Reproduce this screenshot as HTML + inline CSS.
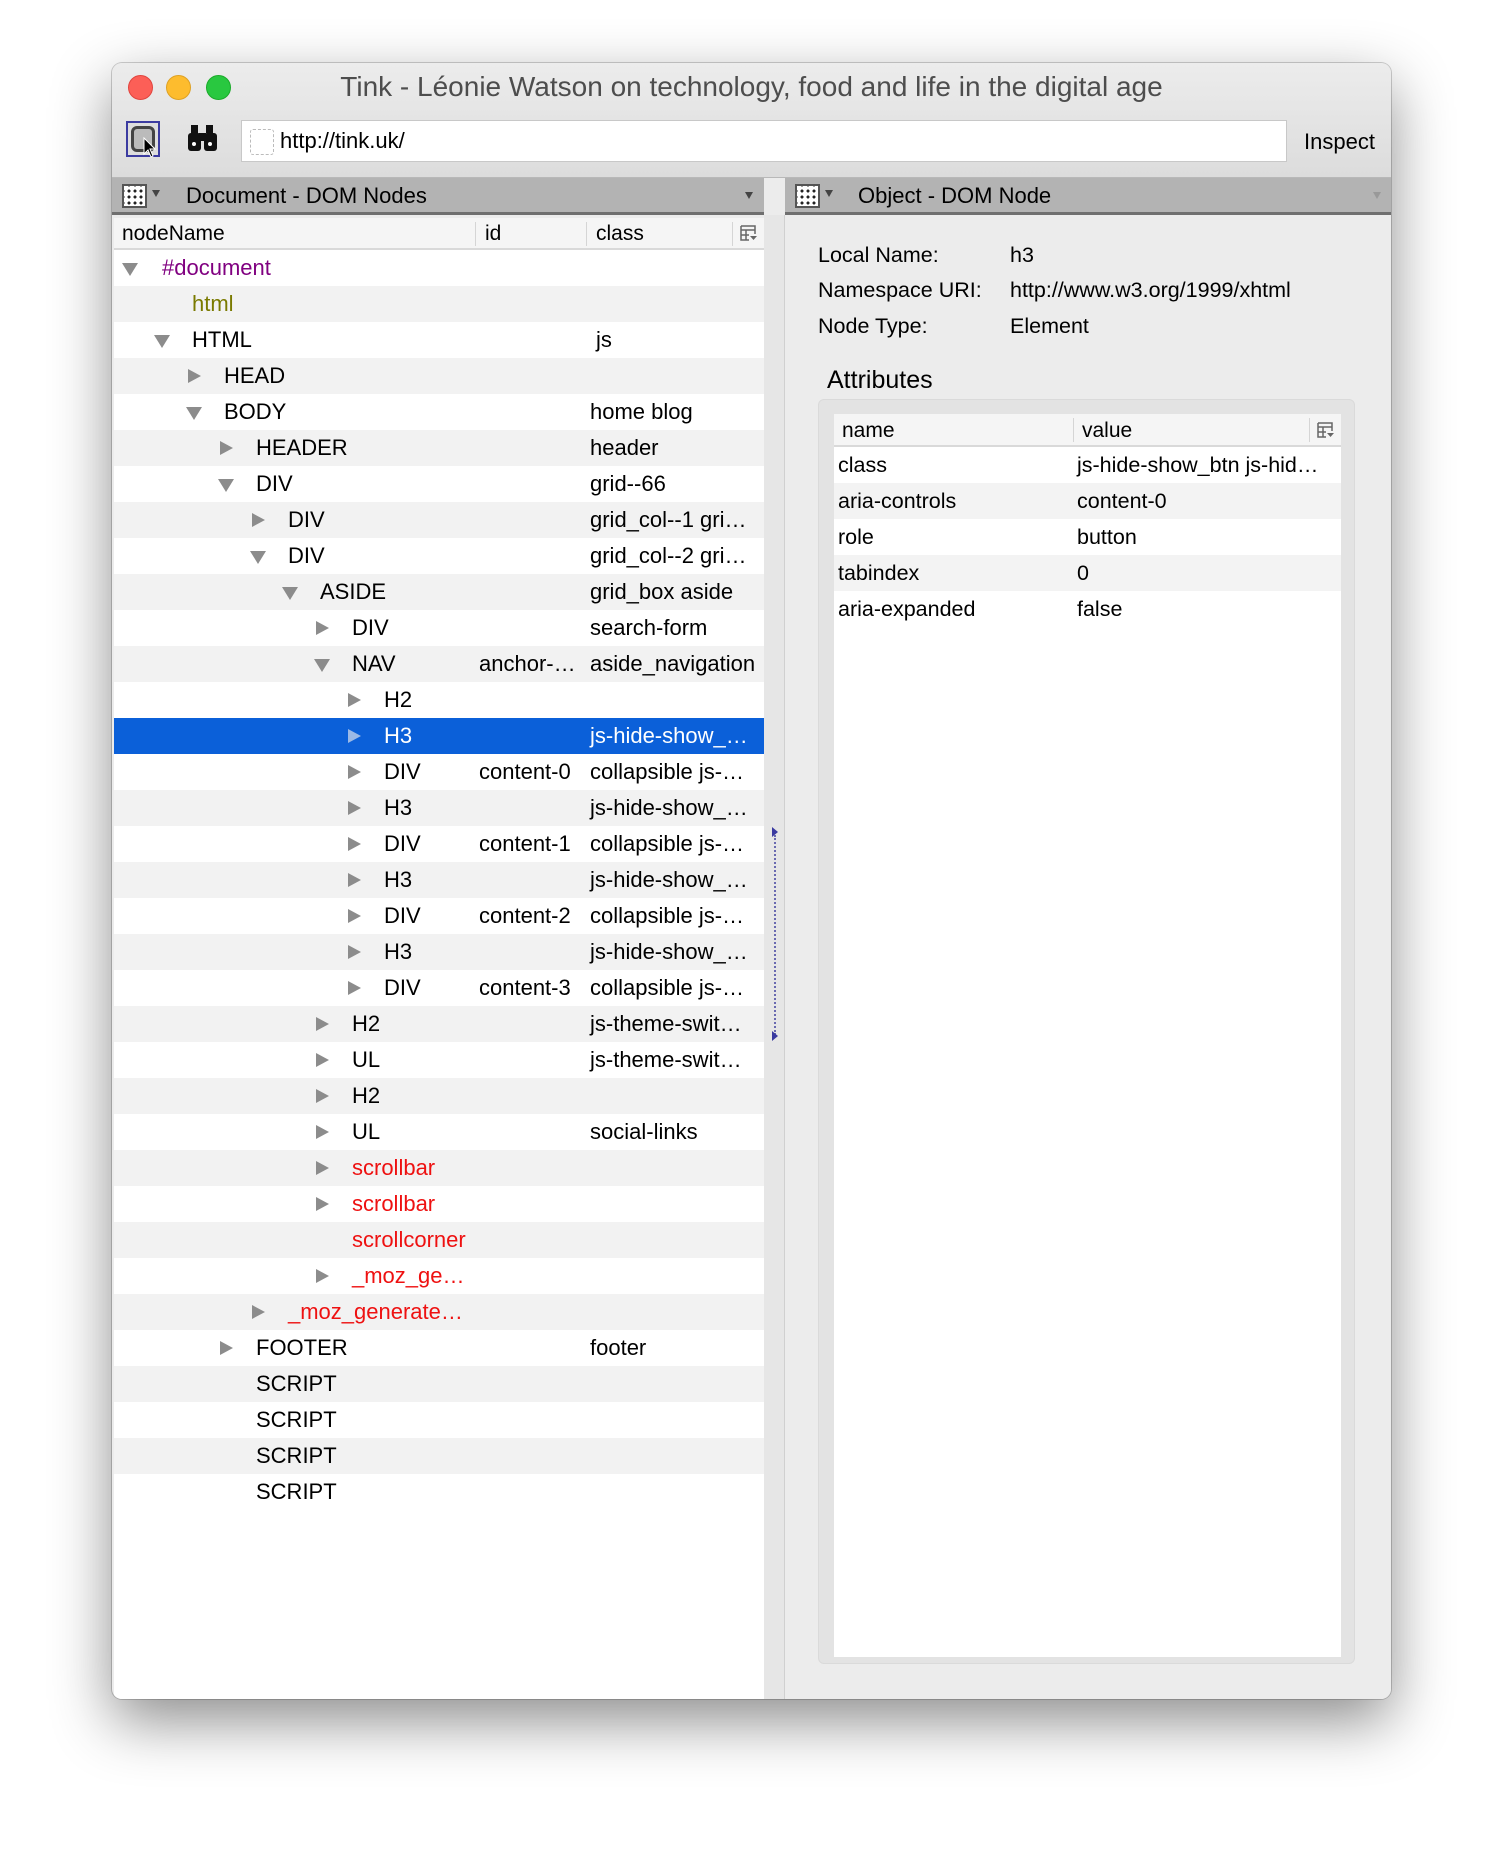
<!DOCTYPE html>
<html><head><meta charset="utf-8">
<style>
*{box-sizing:border-box;margin:0;padding:0}
body{width:1504px;height:1862px;background:#fff;font-family:"Liberation Sans",Arial,sans-serif;position:relative;overflow:hidden}
.win{position:absolute;left:112px;top:63px;width:1279px;height:1636px;border-radius:10px;background:#ececec;box-shadow:0 22px 60px rgba(0,0,0,.45),0 0 0 1px rgba(0,0,0,.18);overflow:hidden}
.titlebar{position:absolute;left:0;top:0;width:100%;height:115px;background:linear-gradient(#ececec,#dcdcdc);border-bottom:1px solid #b8b8b8}
.tl{position:absolute;top:12px;width:25px;height:25px;border-radius:50%}
.title{position:absolute;left:0;right:0;top:8px;text-align:center;font-size:28px;color:#4d4d4d;padding-left:0}
.url{position:absolute;left:129px;top:57px;width:1046px;height:42px;background:#fff;border:1px solid #c8c8c8;font-size:22px;line-height:40px;padding-left:38px}
.url .fav{position:absolute;left:8px;top:8px;width:24px;height:26px;border:1px dashed #bbb;border-radius:3px}
.inspect{position:absolute;left:1192px;top:66px;font-size:22px}
.phead{position:absolute;top:115px;height:37px;background:#b3b3b3;border-bottom:3px solid #6f6f6f;font-size:22px;line-height:36px}
.gridico{position:absolute;top:6px;width:25px;height:24px;background:#fff;border:2px solid #555;
 background-image:radial-gradient(#222 1.4px,transparent 1.6px);background-size:6px 6px;background-position:2px 2px}
.caret{position:absolute;width:0;height:0;border-left:4px solid transparent;border-right:4px solid transparent;border-top:7px solid #444}
.left{position:absolute;left:2px;top:152px;width:650px;height:1484px;background:#fff}
.colhead{position:absolute;left:0;top:0;width:650px;height:32px;background:#f5f5f5;border-bottom:2px solid #d9d9d9;font-size:21px;line-height:32px}
.sep{position:absolute;top:4px;width:1px;height:24px;background:#d5d5d5}
.row{position:absolute;left:0;width:650px;height:36px;font-size:22px;line-height:36px;color:#000;white-space:nowrap}
.row.alt{background:#f2f2f2}
.row.sel{background:#0b60d9;color:#fff}
.row span{position:absolute}
.row span:nth-of-type(1){margin-left:8px}
.tr,.td{position:absolute;width:0;height:0}
.tr{top:11px;border-top:7px solid transparent;border-bottom:7px solid transparent;border-left:13px solid #8c8c8c}
.td{top:13px;border-left:8px solid transparent;border-right:8px solid transparent;border-top:13px solid #8c8c8c}
.sel .tr{border-left-color:#9bb9e6}
.split{position:absolute;left:652px;top:152px;width:21px;height:1484px;background:#e6e6e6;border-right:1px solid #d0d0d0}
.right{position:absolute;left:673px;top:152px;width:606px;height:1484px;background:#ececec}
.lab{position:absolute;font-size:21.5px}
.abox{position:absolute;left:33px;top:184px;width:537px;height:1265px;background:#e3e3e3;border-radius:6px;border:1px solid #dadada}
.atab{position:absolute;left:15px;top:14px;width:507px;height:1243px;background:#fff}
.arow{position:absolute;left:0;width:507px;height:36px;font-size:21.5px;line-height:36px}
.arow.alt{background:#f3f3f3}
.arow span{position:absolute}
</style></head><body>
<div class="win">
 <div class="titlebar">
  <div class="tl" style="left:16px;background:#fc5f57;border:1px solid #e0443e"></div>
  <div class="tl" style="left:54px;background:#fdbc2e;border:1px solid #dea123"></div>
  <div class="tl" style="left:94px;background:#29c840;border:1px solid #1aab29"></div>
  <div class="title">Tink - Léonie Watson on technology, food and life in the digital age</div>
  <div style="position:absolute;left:14px;top:58px;width:34px;height:36px;border:2px solid #3b3ba0;background:#ddd">
   <div style="position:absolute;left:3px;top:3px;width:24px;height:26px;border:3px solid #444;border-radius:6px;background:#bbb"></div>
   <svg style="position:absolute;left:15px;top:14px" width="16" height="22" viewBox="0 0 16 22"><path d="M1 1 L1 17 L5 13 L8 20 L10 19 L7 12 L12 12 Z" fill="#000" stroke="#fff" stroke-width="1"/></svg>
  </div>
  <svg style="position:absolute;left:75px;top:62px" width="32" height="28" viewBox="0 0 32 28"><g fill="#111"><rect x="4" y="0" width="7" height="8"/><rect x="19" y="0" width="7" height="8"/><rect x="1" y="8" width="13" height="18" rx="3"/><rect x="17" y="8" width="13" height="18" rx="3"/><rect x="12" y="8" width="7" height="8"/></g><g fill="#fff"><circle cx="7" cy="19" r="2"/><circle cx="23" cy="19" r="2"/></g></svg>
  <div class="url"><div class="fav"></div>http://tink.uk/</div>
  <div class="inspect">Inspect</div>
 </div>

 <div class="phead" style="left:0;width:652px">
  <div class="gridico" style="left:10px"></div><div class="caret" style="left:40px;top:12px"></div>
  <span style="position:absolute;left:74px">Document - DOM Nodes</span>
  <div class="caret" style="left:633px;top:14px"></div>
 </div>
 <div class="phead" style="left:673px;width:606px">
  <div class="gridico" style="left:10px"></div><div class="caret" style="left:40px;top:12px"></div>
  <span style="position:absolute;left:73px">Object - DOM Node</span>
  <div class="caret" style="left:588px;top:14px;border-top-color:#999"></div>
 </div>

 <div class="left" style="top:155px">
  <div class="colhead">
   <span style="position:absolute;left:8px">nodeName</span><div class="sep" style="left:361px"></div>
   <span style="position:absolute;left:371px">id</span><div class="sep" style="left:472px"></div>
   <span style="position:absolute;left:482px">class</span><div class="sep" style="left:618px"></div>
   <svg style="position:absolute;left:626px;top:7px" width="18" height="18" viewBox="0 0 18 18"><path d="M1 1h14v8M1 1v14h8M1 5h14M6 5v10M1 10h8" stroke="#666" fill="none" stroke-width="1.5"/><path d="M10 11h7l-3.5 4z" fill="#666"/></svg>
  </div>
  <div style="position:absolute;top:32px;left:0;width:650px">
<div class="row" style="top:0"><i class="td" style="left:8px"></i><span style="left:40px;color:#800080">#document</span></div>
<div class="row alt" style="top:36px"><span style="left:70px;color:#7a7a00">html</span></div>
<div class="row" style="top:72px"><i class="td" style="left:40px"></i><span style="left:70px">HTML</span><span style="left:482px">js</span></div>
<div class="row alt" style="top:108px"><i class="tr" style="left:74px"></i><span style="left:102px">HEAD</span></div>
<div class="row" style="top:144px"><i class="td" style="left:72px"></i><span style="left:102px">BODY</span><span style="left:476px">home blog</span></div>
<div class="row alt" style="top:180px"><i class="tr" style="left:106px"></i><span style="left:134px">HEADER</span><span style="left:476px">header</span></div>
<div class="row" style="top:216px"><i class="td" style="left:104px"></i><span style="left:134px">DIV</span><span style="left:476px">grid--66</span></div>
<div class="row alt" style="top:252px"><i class="tr" style="left:138px"></i><span style="left:166px">DIV</span><span style="left:476px">grid_col--1 gri…</span></div>
<div class="row" style="top:288px"><i class="td" style="left:136px"></i><span style="left:166px">DIV</span><span style="left:476px">grid_col--2 gri…</span></div>
<div class="row alt" style="top:324px"><i class="td" style="left:168px"></i><span style="left:198px">ASIDE</span><span style="left:476px">grid_box aside</span></div>
<div class="row" style="top:360px"><i class="tr" style="left:202px"></i><span style="left:230px">DIV</span><span style="left:476px">search-form</span></div>
<div class="row alt" style="top:396px"><i class="td" style="left:200px"></i><span style="left:230px">NAV</span><span style="left:365px">anchor-…</span><span style="left:476px">aside_navigation</span></div>
<div class="row" style="top:432px"><i class="tr" style="left:234px"></i><span style="left:262px">H2</span></div>
<div class="row sel" style="top:468px"><i class="tr" style="left:234px"></i><span style="left:262px">H3</span><span style="left:476px">js-hide-show_…</span></div>
<div class="row" style="top:504px"><i class="tr" style="left:234px"></i><span style="left:262px">DIV</span><span style="left:365px">content-0</span><span style="left:476px">collapsible js-…</span></div>
<div class="row alt" style="top:540px"><i class="tr" style="left:234px"></i><span style="left:262px">H3</span><span style="left:476px">js-hide-show_…</span></div>
<div class="row" style="top:576px"><i class="tr" style="left:234px"></i><span style="left:262px">DIV</span><span style="left:365px">content-1</span><span style="left:476px">collapsible js-…</span></div>
<div class="row alt" style="top:612px"><i class="tr" style="left:234px"></i><span style="left:262px">H3</span><span style="left:476px">js-hide-show_…</span></div>
<div class="row" style="top:648px"><i class="tr" style="left:234px"></i><span style="left:262px">DIV</span><span style="left:365px">content-2</span><span style="left:476px">collapsible js-…</span></div>
<div class="row alt" style="top:684px"><i class="tr" style="left:234px"></i><span style="left:262px">H3</span><span style="left:476px">js-hide-show_…</span></div>
<div class="row" style="top:720px"><i class="tr" style="left:234px"></i><span style="left:262px">DIV</span><span style="left:365px">content-3</span><span style="left:476px">collapsible js-…</span></div>
<div class="row alt" style="top:756px"><i class="tr" style="left:202px"></i><span style="left:230px">H2</span><span style="left:476px">js-theme-swit…</span></div>
<div class="row" style="top:792px"><i class="tr" style="left:202px"></i><span style="left:230px">UL</span><span style="left:476px">js-theme-swit…</span></div>
<div class="row alt" style="top:828px"><i class="tr" style="left:202px"></i><span style="left:230px">H2</span></div>
<div class="row" style="top:864px"><i class="tr" style="left:202px"></i><span style="left:230px">UL</span><span style="left:476px">social-links</span></div>
<div class="row alt" style="top:900px"><i class="tr" style="left:202px"></i><span style="left:230px;color:#ee1111">scrollbar</span></div>
<div class="row" style="top:936px"><i class="tr" style="left:202px"></i><span style="left:230px;color:#ee1111">scrollbar</span></div>
<div class="row alt" style="top:972px"><span style="left:230px;color:#ee1111">scrollcorner</span></div>
<div class="row" style="top:1008px"><i class="tr" style="left:202px"></i><span style="left:230px;color:#ee1111">_moz_ge…</span></div>
<div class="row alt" style="top:1044px"><i class="tr" style="left:138px"></i><span style="left:166px;color:#ee1111">_moz_generate…</span></div>
<div class="row" style="top:1080px"><i class="tr" style="left:106px"></i><span style="left:134px">FOOTER</span><span style="left:476px">footer</span></div>
<div class="row alt" style="top:1116px"><span style="left:134px">SCRIPT</span></div>
<div class="row" style="top:1152px"><span style="left:134px">SCRIPT</span></div>
<div class="row alt" style="top:1188px"><span style="left:134px">SCRIPT</span></div>
<div class="row" style="top:1224px"><span style="left:134px">SCRIPT</span></div>
  </div>
 </div>

 <div class="split">
  <div style="position:absolute;left:10px;top:620px;height:200px;border-left:2px dotted #6a6ab0"></div>
  <div style="position:absolute;left:8px;top:612px;border-top:5px solid transparent;border-bottom:5px solid transparent;border-left:6px solid #3a3aa0"></div>
  <div style="position:absolute;left:8px;top:816px;border-top:5px solid transparent;border-bottom:5px solid transparent;border-left:6px solid #3a3aa0"></div>
 </div>

 <div class="right">
  <div class="lab" style="left:33px;top:28px">Local Name:</div><div class="lab" style="left:225px;top:28px">h3</div>
  <div class="lab" style="left:33px;top:63px">Namespace URI:</div><div class="lab" style="left:225px;top:63px">http://www.w3.org/1999/xhtml</div>
  <div class="lab" style="left:33px;top:99px">Node Type:</div><div class="lab" style="left:225px;top:99px">Element</div>
  <div class="lab" style="left:42px;top:151px;font-size:25px">Attributes</div>
  <div class="abox">
   <div class="atab">
    <div style="position:absolute;left:0;top:0;width:507px;height:33px;background:#f5f5f5;border-bottom:2px solid #d9d9d9;font-size:21px;line-height:34px">
     <span style="position:absolute;left:8px">name</span><div class="sep" style="left:239px"></div>
     <span style="position:absolute;left:248px">value</span><div class="sep" style="left:475px"></div>
     <svg style="position:absolute;left:483px;top:8px" width="18" height="18" viewBox="0 0 18 18"><path d="M1 1h14v8M1 1v14h8M1 5h14M6 5v10M1 10h8" stroke="#666" fill="none" stroke-width="1.5"/><path d="M10 11h7l-3.5 4z" fill="#666"/></svg>
    </div>
    <div class="arow" style="top:33px"><span style="left:4px">class</span><span style="left:243px">js-hide-show_btn js-hid…</span></div>
    <div class="arow alt" style="top:69px"><span style="left:4px">aria-controls</span><span style="left:243px">content-0</span></div>
    <div class="arow" style="top:105px"><span style="left:4px">role</span><span style="left:243px">button</span></div>
    <div class="arow alt" style="top:141px"><span style="left:4px">tabindex</span><span style="left:243px">0</span></div>
    <div class="arow" style="top:177px"><span style="left:4px">aria-expanded</span><span style="left:243px">false</span></div>
   </div>
  </div>
 </div>
</div>
</body></html>
